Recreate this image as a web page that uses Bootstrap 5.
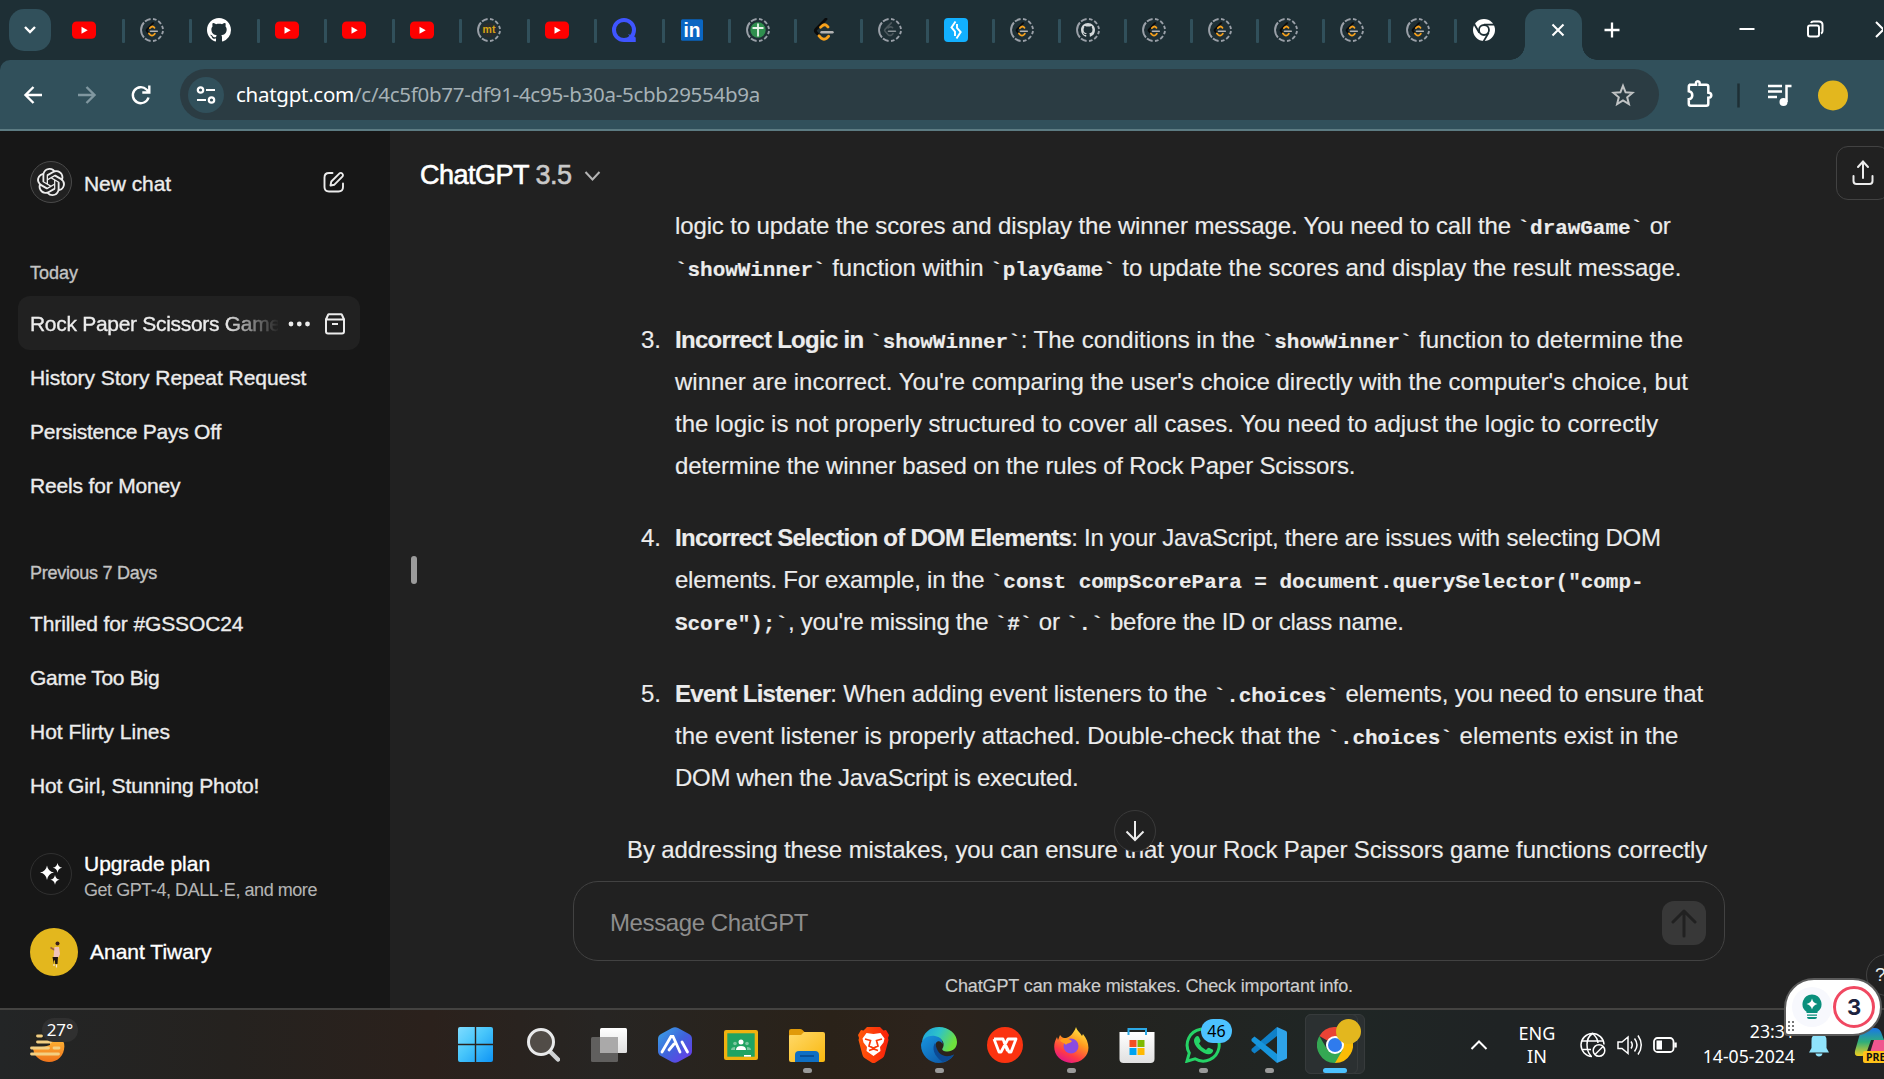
<!DOCTYPE html>
<html lang="en">
<head>
<meta charset="utf-8">
<title>ChatGPT</title>
<link href="https://cdn.jsdelivr.net/npm/bootstrap@5.3.0/dist/css/bootstrap.min.css" rel="stylesheet">
<style>
body{width:1884px;height:1079px;overflow:hidden;background:#212121;color:#ececec;font-family:"Liberation Sans",Arial,sans-serif;font-size:21px;line-height:1.3}
svg{display:block;flex:none}
/* tab strip */
.strip{height:60px;background:#1e2f35}
.strip>*{flex:none}
.tab-search{width:42px;height:42px;margin:9px 4.5px 9px 9px;border-radius:15px;background:#31505b}
.tb{width:66px;padding-left:16.5px;position:relative}
.tb.wide{width:67.5px}
.tb::after{content:"";width:3px;height:24px;border-radius:1px;background:#31505b;position:absolute;right:-1.5px;top:19px}
.tb.last{width:55px}.tb.last::after{display:none}
.active-tab{width:57px;height:51px;margin:9px 15px 0;border-radius:14px 14px 0 0;background:#31505b;position:relative;padding:0 0 9px 8px}
.active-tab::before,.active-tab::after{content:"";position:absolute;bottom:0;width:15px;height:15px}
.active-tab::before{left:-15px;background:radial-gradient(circle at 0 0,#1e2f35 14.5px,#31505b 15px)}
.active-tab::after{right:-15px;background:radial-gradient(circle at 100% 0,#1e2f35 14.5px,#31505b 15px)}
/* address bar */
.bar-wrap{height:71px;background:#1e2f35}
.bar{height:71px;background:#31505b;border-bottom:2px solid #5c7b82;border-radius:10px 0 0 0}
.omni{width:1479px;height:51px;border-radius:26px;background:#2b3c43;font-family:"Noto Sans","Open Sans",sans-serif;font-size:20.5px;letter-spacing:-.27px;color:#a5b1b6;margin-left:29px}
.omni b{font-weight:400;color:#fff}
.site-btn{width:36px;height:36px;background:#31505b}
/* letter spacing steps */
.k05{letter-spacing:-.05px}.k12{letter-spacing:-.125px}.k17{letter-spacing:-.17px}.k23{letter-spacing:-.235px}.k28{letter-spacing:-.28px}.k40{letter-spacing:-.4px}.k45{letter-spacing:-.45px}
/* app */
.app{height:877px}
.side{width:390px;background:#171717}
.side span{-webkit-text-stroke:.35px}
.side .sub span{-webkit-text-stroke:.1px}
.logo-ring{width:42px;height:42px;border:1.5px solid #4a4a4a;background:#212121}
.row-h{height:54px;padding:2px 12px 0;margin:0 30px 0 18px;border-radius:12px;white-space:nowrap}
.row-h.sel{background:#212121}
.sec{font-size:18px;color:#c3c3c3;padding-left:30px}
.fade-t{width:248px;overflow:hidden;letter-spacing:-.3px;-webkit-mask-image:linear-gradient(90deg,#000 195px,transparent 250px)}
.chat{width:1493px;position:relative}
.ttl{font-size:27px;letter-spacing:-.5px;-webkit-text-stroke:.6px;color:#fff}
.ttl span{color:#c9c9c9}
.msg{font-size:24px;line-height:42px;white-space:nowrap;-webkit-text-stroke:.15px}
.ln{display:block;width:max-content}
.item{margin-bottom:30px}
.num{width:48px;padding-left:14px}
.msg code{font:bold 21px "Liberation Mono",monospace;color:#ececec;letter-spacing:-.05px}
.msg b{letter-spacing:-.72px}
.composer{width:1152px;height:80px;border:1.5px solid #424242;border-radius:25px;background:#212121;font-size:24px;color:#8e8e8e}
.send{width:44px;height:44px;border-radius:12px;background:#383838}
.note{font-size:18px;color:#cdcdcd;-webkit-text-stroke:.15px}
.down{width:42px;height:42px;border:1.5px solid #3a3a3a;background:#212121;position:absolute;left:723.5px;top:679px}
.share{width:54px;height:54px;border:1.5px solid #424242;border-radius:12px;position:absolute;left:1446px;top:15px}
.help{width:42px;height:42px;border:1.5px solid #424242;position:absolute;left:1476px;top:823px;font-size:19px;padding-left:8px}
.grip{width:6px;height:28px;border-radius:3px;background:#9b9b9b;position:absolute;left:21px;top:425px}
/* taskbar */
.task{height:71px;border-top:2px solid #444341;background:linear-gradient(90deg,#232526 0,#25221f 230px,#2b211c 430px,#29231f 520px,#272523 600px,#2a2219 830px,#2c231c 930px,#24231f 1080px,#1f2625 1350px,#1f2324 1500px,#222324 1884px);font-family:"Noto Sans","Open Sans",sans-serif;font-size:18px;color:#fff;position:relative}
.weather{width:442.5px;padding-left:30px}
.app-i{width:66px;height:69px;position:relative}
.app-i.start{margin-right:1.5px}
.app-i.run::after{content:"";position:absolute;left:28.5px;top:58px;width:9px;height:5px;border-radius:3px;background:#9a9a9a}
.app-i.on::after{left:21px;width:24px;background:#4cc2ff}
.pill{position:absolute;left:42px;top:8px;width:36px;height:24px;border-radius:12px;background:#303030;font-size:17px;line-height:24px;text-align:center}
.cnt{position:absolute;left:31px;top:9px;width:31px;height:24px;border-radius:12px;background:#4cc2ff;color:#000;font-size:16px;line-height:24px;text-align:center}
.dot{position:absolute;left:34px;top:9px;width:25px;height:25px;background:#e3b71e}
.glow{position:absolute;left:3px;top:4px;width:60px;height:60px;border-radius:6px;background:#2b3031;border:1px solid #373b3c}
.glow+.glow{width:53px}
.lang{line-height:23px;width:60px}
.clock{line-height:25px;width:94px;font-size:17.7px;padding-bottom:2px}
.gram{position:absolute;left:1784px;top:978px;width:98px;height:58px;border:2px solid #5b5b5b;border-radius:30px 29px 29px 4px;background:#fff;z-index:5}
.ring{width:42px;height:42px;border:3.5px solid #f04861;font:bold 22px Inter,sans-serif;color:#1c2340}
.gl{width:40px;height:40px;background:#f7f8fd}
</style>
</head>
<body class="d-flex flex-column">
<svg width="0" height="0" class="position-absolute">
<defs>
<linearGradient id="gw" x1="0" y1="0" x2="1" y2="1"><stop offset="0" stop-color="#7fdcff"/><stop offset=".45" stop-color="#48c6fb"/><stop offset="1" stop-color="#0e94f5"/></linearGradient>
<linearGradient id="gh" x1="0" y1="0" x2="1" y2="1"><stop offset="0" stop-color="#3aa7e6"/><stop offset=".5" stop-color="#3f63dc"/><stop offset="1" stop-color="#6f35ea"/></linearGradient>
<linearGradient id="gf" x1="0" y1="0" x2="1" y2="1"><stop offset="0" stop-color="#ffd96a"/><stop offset="1" stop-color="#f9b80e"/></linearGradient>
<linearGradient id="gb" x1="0" y1="0" x2="1" y2="0"><stop offset="0" stop-color="#ff5a0a"/><stop offset="1" stop-color="#fa1f0a"/></linearGradient>
<linearGradient id="ge" x1="0" y1="0" x2="1" y2=".4"><stop offset="0" stop-color="#1b9de0"/><stop offset=".5" stop-color="#2ec3c9"/><stop offset="1" stop-color="#6ee03c"/></linearGradient>
<linearGradient id="ge2" x1="0" y1="0" x2="1" y2="1"><stop offset="0" stop-color="#1795e0"/><stop offset="1" stop-color="#0c4f9e"/></linearGradient>
<linearGradient id="gx" x1=".8" y1="0" x2=".3" y2="1"><stop offset="0" stop-color="#fff04a"/><stop offset=".4" stop-color="#ff9a1f"/><stop offset=".75" stop-color="#ff3b45"/><stop offset="1" stop-color="#e0158c"/></linearGradient>
<linearGradient id="gs" x1="0" y1="0" x2="0" y2="1"><stop offset="0" stop-color="#ffc13a"/><stop offset="1" stop-color="#f0741b"/></linearGradient>
<linearGradient id="gq" x1="0" y1="0" x2="0" y2="1"><stop offset="0" stop-color="#fff"/><stop offset="1" stop-color="#e0e0e0"/></linearGradient>
<linearGradient id="gc" x1="0" y1="0" x2="0" y2="1"><stop offset="0" stop-color="#1877e8"/><stop offset=".5" stop-color="#2fae7a"/><stop offset="1" stop-color="#f3cf1c"/></linearGradient>
</defs>
<symbol id="yt" viewBox="0 0 24 24"><rect y="3.5" width="24" height="17.3" rx="4.5" fill="#f00"/><path d="M9.5 8.7v7l6.2-3.5z" fill="#fff"/></symbol>
<symbol id="dash" viewBox="0 0 24 24"><g fill="none" stroke="#9aa0a8" stroke-width="1.9"><path d="M10.600 1A11.100 11.100 0 0 0 5 3.500M4 4.500A11 11 0 0 0 4 19.500M5 20.500A11.100 11.100 0 0 0 10.600 23"/><path d="M13 1A11 11 0 0 1 16.500 2M18.200 3A11 11 0 0 1 21 6M22 7.800A11 11 0 0 1 23 11M23 13A11 11 0 0 1 22 16.200M21 18A11 11 0 0 1 18.200 21M16.500 22A11 11 0 0 1 13 23"/></g></symbol>
<symbol id="lcg" viewBox="0 0 24 24"><path d="M14 1 4 11.2Q2.6 12.7 4 14.2L7 17.4" fill="none" stroke="#0a0a0a" stroke-width="2.8" stroke-linecap="round"/><path d="M8.6 9 10.6 7.2Q12.7 5.7 14.6 7.2L16 8.6M7 17.4 9.2 19.8Q12 22 14.8 19.8L16.6 18" transform="translate(0 .3)" fill="none" stroke="#f7a11b" stroke-width="2.8" stroke-linecap="round"/><path d="M9.5 14.2h11" stroke="#b3b3b3" stroke-width="2.4" stroke-linecap="round"/></symbol>
<symbol id="lcd" viewBox="0 0 24 24"><use href="#dash" width="24" height="24"/><use href="#lcg" x="4.5" y="4.3" width="15" height="15"/></symbol>
<symbol id="lcx" viewBox="0 0 24 24"><use href="#dash" width="24" height="24"/><g transform="translate(4.5 4.3) scale(.63)" fill="none" stroke="#4b575c" stroke-width="2.6" stroke-linecap="round"><path d="M14 1 4 11.2Q2.6 12.7 4 14.2L9.2 19.8Q12 22 14.8 19.8L16.6 18M9 9Q12.7 5.7 16 8.6"/><path d="M9.5 14.2h11" stroke="#8a9296"/></g></symbol>
<symbol id="ghb" viewBox="0 0 16 16"><path fill="currentColor" d="M8 0C3.58 0 0 3.58 0 8c0 3.54 2.29 6.53 5.47 7.59.4.07.55-.17.55-.38 0-.19-.01-.82-.01-1.49-2.01.37-2.53-.49-2.69-.94-.09-.23-.48-.94-.82-1.13-.28-.15-.68-.52-.01-.53.63-.01 1.08.58 1.23.82.72 1.21 1.87.87 2.33.66.07-.52.28-.87.51-1.07-1.78-.2-3.64-.89-3.64-3.95 0-.87.31-1.59.82-2.15-.08-.2-.36-1.02.08-2.12 0 0 .67-.21 2.2.82.64-.18 1.32-.27 2-.27s1.36.09 2 .27c1.53-1.04 2.2-.82 2.2-.82.44 1.1.16 1.92.08 2.12.51.56.82 1.27.82 2.15 0 3.07-1.87 3.75-3.65 3.95.29.25.54.73.54 1.48 0 1.07-.01 1.93-.01 2.2 0 .21.15.46.55.38A8.01 8.01 0 0 0 16 8c0-4.42-3.58-8-8-8z"/></symbol>
</svg>

<header class="strip d-flex">
 <div class="tab-search d-flex align-items-center justify-content-center"><svg width="14" height="10" viewBox="0 0 14 10"><path d="M2 2l5 5 5-5" fill="none" stroke="#fff" stroke-width="2.4"/></svg></div>
 <div class="tb wide d-flex align-items-center"><svg width="24" height="24"><use href="#yt"/></svg></div>
 <div class="tb wide d-flex align-items-center"><svg width="24" height="24"><use href="#lcd"/></svg></div>
 <div class="tb wide d-flex align-items-center text-white"><svg width="24" height="24"><use href="#ghb"/></svg></div>
 <div class="tb wide d-flex align-items-center"><svg width="24" height="24"><use href="#yt"/></svg></div>
 <div class="tb wide d-flex align-items-center"><svg width="24" height="24"><use href="#yt"/></svg></div>
 <div class="tb wide d-flex align-items-center"><svg width="24" height="24"><use href="#yt"/></svg></div>
 <div class="tb wide d-flex align-items-center"><svg width="24" height="24" viewBox="0 0 24 24"><use href="#dash"/><circle cx="12" cy="12" r="7.5" fill="#2a2d2e"/><text x="12" y="15" font-size="10.5" font-weight="bold" font-family="Liberation Sans" text-anchor="middle" fill="#d9a514">mt</text></svg></div>
 <div class="tb wide d-flex align-items-center"><svg width="24" height="24"><use href="#yt"/></svg></div>
 <div class="tb wide d-flex align-items-center"><svg width="24" height="24" viewBox="0 0 24 24"><circle cx="12" cy="12" r="10" fill="none" stroke="#3f55ff" stroke-width="4"/><path d="M12 20h11.5v4H12z" fill="#3f55ff"/><path d="M16 16l6 8h1.500v-5z" fill="#3f55ff"/></svg></div>
 <div class="tb d-flex align-items-center"><svg width="24" height="24" viewBox="0 0 24 24"><rect x="1" y="1.3" width="22" height="21.5" rx="1.5" fill="#0a66c2"/><text x="12" y="19.4" font-size="20" font-weight="bold" font-family="Liberation Sans" text-anchor="middle" fill="#fff" textLength="17" lengthAdjust="spacingAndGlyphs">in</text></svg></div>
 <div class="tb d-flex align-items-center"><svg width="24" height="24" viewBox="0 0 24 24"><use href="#dash"/><circle cx="12" cy="12" r="7.7" fill="#2f8f4e"/><path d="M12 5.5v13M6.5 10h11" stroke="#e8f3ea" stroke-width="1.8"/></svg></div>
 <div class="tb d-flex align-items-center"><svg width="24" height="24"><use href="#lcg"/></svg></div>
 <div class="tb d-flex align-items-center"><svg width="24" height="24"><use href="#lcx"/></svg></div>
 <div class="tb d-flex align-items-center"><svg width="24" height="24" viewBox="0 0 24 24"><rect width="24" height="24" rx="4" fill="#12b0ff"/><path d="M11.500 3.500 7.500 9.500l3.500 4v4.500M13 6v4l3.700 4-4.200 6.500" fill="none" stroke="#fff" stroke-width="1.900"/></svg></div>
 <div class="tb d-flex align-items-center"><svg width="24" height="24"><use href="#lcd"/></svg></div>
 <div class="tb d-flex align-items-center"><svg width="24" height="24" viewBox="0 0 24 24" color="#d3d8da"><use href="#dash"/><use href="#ghb" x="5" y="5" width="14" height="14"/></svg></div>
 <div class="tb d-flex align-items-center"><svg width="24" height="24"><use href="#lcd"/></svg></div>
 <div class="tb d-flex align-items-center"><svg width="24" height="24"><use href="#lcd"/></svg></div>
 <div class="tb d-flex align-items-center"><svg width="24" height="24"><use href="#lcd"/></svg></div>
 <div class="tb d-flex align-items-center"><svg width="24" height="24"><use href="#lcd"/></svg></div>
 <div class="tb d-flex align-items-center"><svg width="24" height="24"><use href="#lcd"/></svg></div>
 <div class="tb last d-flex align-items-center"><svg width="24" height="24" viewBox="0 0 24 24"><circle cx="12" cy="12" r="11" fill="#fff"/><circle cx="12" cy="12" r="5" fill="#fff" stroke="#1e2f35" stroke-width="1.8"/><path d="M12 6.600h10.500M7.300 14.800 2.200 6M16.600 14.800 11.400 23.600" stroke="#1e2f35" stroke-width="1.8"/></svg></div>
 <div class="active-tab d-flex align-items-center justify-content-center"><svg width="14" height="14" viewBox="0 0 14 14"><path d="M1.500 1.500l11 11M12.500 1.500l-11 11" stroke="#fff" stroke-width="2.100"/></svg></div>
 <svg width="286" height="60" viewBox="0 0 286 60" fill="none" stroke="#fff" stroke-width="2"><path d="M15 22.500v15M7.500 30h15" stroke-width="2.300"/><path d="M142.500 29h15"/><rect x="211" y="25.500" width="11" height="11" rx="2"/><path d="M214 23q.5-1.500 2.500-1.500h5.500q3.500 0 3.500 3.500v6q0 2-1.500 2.500"/><path d="M279 22l15 15M294 22l-15 15"/></svg>
</header>

<div class="bar-wrap">
<nav class="bar d-flex align-items-center">
 <svg width="151" height="30" viewBox="0 0 151 30" fill="none" stroke-width="2.400"><path d="M42 15H25.500M33.500 7 25.500 15l8 8" stroke="#fff"/><path d="M78 15h16.500M86.500 7l8 8-8 8" stroke="#8097a0"/><path d="M148.500 17.500A8 8 0 1 1 146.500 9.500L149 12M149.300 5.500v7h-7" stroke="#fff"/></svg>
 <div class="omni d-flex align-items-center">
  <div class="site-btn rounded-circle ms-2 d-flex align-items-center justify-content-center"><svg width="20" height="20" viewBox="0 0 20 20" fill="none" stroke="#fff" stroke-width="2.200"><circle cx="4.500" cy="5" r="2.700"/><path d="M10 5h9M1 15h9"/><circle cx="15.500" cy="15" r="2.700"/></svg></div>
  <span class="ms-2 ps-1"><b>chatgpt.com</b>/c/4c5f0b77-df91-4c95-b30a-5cbb29554b9a</span>
  <svg class="ms-auto me-4" width="24" height="24" viewBox="0 0 24 24"><path d="M12 2.800l2.600 6.500 7 .5-5.400 4.500 1.700 6.800-5.900-3.700-5.900 3.700 1.700-6.800-5.400-4.500 7-.5z" fill="none" stroke="#c0c3c4" stroke-width="2"/></svg>
 </div>
 <svg width="225" height="50" viewBox="1659 0 225 50" fill="none" stroke="#fff" stroke-width="2.500"><path d="M1690 15.500h7q-.5-3.500 1.800-3.500t1.800 3.500h6.700q2 0 2 2v6q3 .2 3 2.500t-3 2.500v6q0 2-2 2h-15.500q-2 0-2-2v-4.500q3.500-.5 3.500-4t-3.500-4v-4.500q0-2 2-2z" transform="translate(-1 -.8)"/><path d="M1738.500 13.500v24" stroke="#1e2f35"/><path d="M1768 16h14M1768 21.500h14M1768 27h9"/><path d="M1786.500 32V16h5" /><circle cx="1783.500" cy="32" r="4" fill="#fff" stroke="none"/><circle cx="1833" cy="25.500" r="15" fill="#e3b71e" stroke="none"/></svg>
</nav>
</div>

<main class="app d-flex">
 <aside class="side d-flex flex-column">
  <div class="d-flex align-items-center" style="height:42px;margin:30px 45px 0 30px">
   <div class="logo-ring rounded-circle d-flex align-items-center justify-content-center"><svg width="28" height="28" viewBox="0 0 24 24" fill="#ececec"><path d="M22.2819 9.8211a5.9847 5.9847 0 0 0-.5157-4.9108 6.0462 6.0462 0 0 0-6.5098-2.9A6.0651 6.0651 0 0 0 4.9807 4.1818a5.9847 5.9847 0 0 0-3.9977 2.9 6.0462 6.0462 0 0 0 .7427 7.0966 5.98 5.98 0 0 0 .511 4.9107 6.051 6.051 0 0 0 6.5146 2.9001A5.9847 5.9847 0 0 0 13.2599 24a6.0557 6.0557 0 0 0 5.7718-4.2058 5.9894 5.9894 0 0 0 3.9977-2.9001 6.0557 6.0557 0 0 0-.7475-7.0729zm-9.022 12.6081a4.4755 4.4755 0 0 1-2.8764-1.0408l.1419-.0804 4.7783-2.7582a.7948.7948 0 0 0 .3927-.6813v-6.7369l2.02 1.1686a.071.071 0 0 1 .038.052v5.5826a4.504 4.504 0 0 1-4.4945 4.4944zm-9.6607-4.1254a4.4708 4.4708 0 0 1-.5346-3.0137l.142.0852 4.783 2.7582a.7712.7712 0 0 0 .7806 0l5.8428-3.3685v2.3324a.0804.0804 0 0 1-.0332.0615L9.74 19.9502a4.4992 4.4992 0 0 1-6.1408-1.6464zM2.3408 7.8956a4.485 4.485 0 0 1 2.3655-1.9728V11.6a.7664.7664 0 0 0 .3879.6765l5.8144 3.3543-2.0201 1.1685a.0757.0757 0 0 1-.071 0l-4.8303-2.7865A4.504 4.504 0 0 1 2.3408 7.872zm16.5963 3.8558L13.1038 8.364 15.1192 7.2a.0757.0757 0 0 1 .071 0l4.8303 2.7913a4.4944 4.4944 0 0 1-.6765 8.1042v-5.6772a.79.79 0 0 0-.407-.667zm2.0107-3.0231l-.142-.0852-4.7735-2.7818a.7759.7759 0 0 0-.7854 0L9.409 9.2297V6.8974a.0662.0662 0 0 1 .0284-.0615l4.8303-2.7866a4.4992 4.4992 0 0 1 6.6802 4.66zM8.3065 12.863l-2.02-1.1638a.0804.0804 0 0 1-.038-.0567V6.0742a4.4992 4.4992 0 0 1 7.3757-3.4537l-.142.0805L8.704 5.459a.7948.7948 0 0 0-.3927.6813zm1.0976-2.3654l2.602-1.4998 2.6069 1.4998v2.9994l-2.5974 1.4997-2.6067-1.4997Z"/></svg></div>
   <span class="k05 pt-1" style="margin-left:12px">New chat</span>
   <svg class="ms-auto" width="22" height="22" viewBox="0 0 22 22" fill="none" stroke="#ececec" stroke-width="1.900" stroke-linejoin="round" stroke-linecap="round"><path d="M9.500 2H6Q1.500 2 1.500 6.500V16Q1.500 20.500 6 20.500h9.500Q20 20.500 20 16v-3.500"/><path d="M7.500 14.500l.8-4 8.200-8.200q1.500-1 2.800.3t.3 2.800l-8.200 8.300z"/></svg>
  </div>
  <div class="sec" style="margin-top:59px;height:34px"><span>Today</span></div>
  <div class="row-h sel d-flex align-items-center"><span class="fade-t">Rock Paper Scissors Game</span><svg width="70" height="22" viewBox="0 0 70 22" fill="none" stroke="#ececec" stroke-width="2"><g fill="#ececec" stroke="none" transform="translate(3)"><circle cx="10" cy="11" r="2.400"/><circle cx="18.300" cy="11" r="2.400"/><circle cx="26.500" cy="11" r="2.400"/></g><path d="M48 6.500v12q0 2 2 2h14q2 0 2-2v-12zM48 6.500l2-4.500q.3-.7 1-.7h12q.7 0 1 .7l2 4.500M54 11h6"/></svg></div>
  <div class="row-h d-flex align-items-center"><span class="k05">History Story Repeat Request</span></div>
  <div class="row-h d-flex align-items-center"><span class="k23">Persistence Pays Off</span></div>
  <div class="row-h d-flex align-items-center"><span class="k17">Reels for Money</span></div>
  <div class="sec" style="margin-top:50px;height:34px"><span class="k28">Previous 7 Days</span></div>
  <div class="row-h d-flex align-items-center"><span class="k12">Thrilled for #GSSOC24</span></div>
  <div class="row-h d-flex align-items-center"><span class="k28">Game Too Big</span></div>
  <div class="row-h d-flex align-items-center"><span>Hot Flirty Lines</span></div>
  <div class="row-h d-flex align-items-center"><span class="k12">Hot Girl, Stunning Photo!</span></div>
  <div class="d-flex align-items-center" style="margin:35px 0 0 30px;height:54px">
   <div class="logo-ring rounded-circle d-flex align-items-center justify-content-center bg-transparent" style="border-color:#303030"><svg width="24" height="24" viewBox="0 0 24 24" fill="#fff"><path d="M8 3.500q1 6 7 7-6 1-7 7.500-1-6.500-7-7.500 6-1 7-7zM18.500 1q.7 4 4.700 4.700-4 .7-4.700 5-.7-4.300-4.700-5Q17.800 5 18.500 1zM16 13q.7 4 4.700 4.700-4 .7-4.700 5-.7-4.300-4.700-5Q15.300 17 16 13z"/></svg></div>
   <div style="margin:5px 0 0 12px;line-height:27px"><div class="text-white"><span>Upgrade plan</span></div><div class="sub" style="font-size:18px;color:#b4b4b4"><span class="k45">Get GPT-4, DALL·E, and more</span></div></div>
  </div>
  <div class="d-flex align-items-center" style="margin:27px 0 0 30px;height:48px">
   <svg width="48" height="48" viewBox="0 0 48 48"><circle cx="24" cy="24" r="24" fill="#e3b71e"/><path d="M20.500 19.500l5 3" stroke="#9b5c43" stroke-width="1.500"/><circle cx="27.500" cy="15.500" r="2" fill="#3a2019"/><path d="M24.500 19h4.500l1 7-1.500 3.500h-5z" fill="#efc3b6"/><path d="M22.500 29h5.500l-.5 7h-2.300l-.3-4-1 1v3.500" fill="#1d1512"/><path d="M24 36v2M26.500 36.500v3" stroke="#f5e3d0" stroke-width="1.200"/></svg>
   <span class="text-white" style="margin-left:12px">Anant Tiwary</span>
  </div>
 </aside>

 <section class="chat d-flex flex-column">
  <div class="d-flex align-items-center" style="height:42px;margin:24px 0 0 30px"><span class="ttl">ChatGPT <span>3.5</span></span><svg style="margin-left:12px" width="17" height="12" viewBox="0 0 17 12"><path d="M1.500 2l7 7.500 7-7.500" fill="none" stroke="#b4b4b4" stroke-width="2"/></svg></div>
  <div class="msg" style="margin:8px 0 0 237px">
   <div class="item d-flex"><div class="num"></div><div>
    <span class="ln k12">logic to update the scores and display the winner message. You need to call the <code>`drawGame`</code> or</span>
    <span class="ln k05"><code>`showWinner`</code> function within <code>`playGame`</code> to update the scores and display the result message.</span></div></div>
   <div class="item d-flex"><div class="num">3.</div><div>
    <span class="ln"><b>Incorrect Logic in</b> <code>`showWinner`</code>: The conditions in the <code>`showWinner`</code> function to determine the</span>
    <span class="ln">winner are incorrect. You're comparing the user's choice directly with the computer's choice, but</span>
    <span class="ln">the logic is not properly structured to cover all cases. You need to adjust the logic to correctly</span>
    <span class="ln k17">determine the winner based on the rules of Rock Paper Scissors.</span></div></div>
   <div class="item d-flex"><div class="num">4.</div><div>
    <span class="ln k23"><b>Incorrect Selection of DOM Elements</b>: In your JavaScript, there are issues with selecting DOM</span>
    <span class="ln k23">elements. For example, in the <code>`const compScorePara = document.querySelector("comp-</code></span>
    <span class="ln k28"><code>Score");`</code>, you're missing the <code>`#`</code> or <code>`.`</code> before the ID or class name.</span></div></div>
   <div class="item d-flex"><div class="num">5.</div><div>
    <span class="ln k17"><b>Event Listener</b>: When adding event listeners to the <code>`.choices`</code> elements, you need to ensure that</span>
    <span class="ln">the event listener is properly attached. Double-check that the <code>`.choices`</code> elements exist in the</span>
    <span class="ln k28">DOM when the JavaScript is executed.</span></div></div>
   <span class="ln k12">By addressing these mistakes, you can ensure that your Rock Paper Scissors game functions correctly</span>
  </div>
  <div class="composer d-flex align-items-center" style="margin:10px 0 0 183px;padding:3px 18px 0 36px"><span class="k40">Message ChatGPT</span><div class="send ms-auto d-flex align-items-center justify-content-center"><svg width="26" height="30" viewBox="0 0 26 30"><path d="M13 28V3M2 14 13 3l11 11" fill="none" stroke="#212121" stroke-width="3" stroke-linecap="round" stroke-linejoin="round"/></svg></div></div>
  <div class="note text-center" style="margin:14px 0 0 24px;width:1470px"><span class="k12">ChatGPT can make mistakes. Check important info.</span></div>
  <div class="down rounded-circle d-flex align-items-center justify-content-center"><svg width="20" height="22" viewBox="0 0 20 22"><path d="M10 1v19M1.500 11.500 10 20l8.500-8.500" fill="none" stroke="#ececec" stroke-width="2"/></svg></div>
  <div class="share d-flex align-items-center justify-content-center"><svg width="22" height="26" viewBox="0 0 22 26"><path d="M11 18V2M6 7l5-5.500L16 7M1.500 16v5q0 3 3 3h13q3 0 3-3v-5" fill="none" stroke="#ececec" stroke-width="2" stroke-linecap="round"/></svg></div>
  <div class="help rounded-circle d-flex align-items-center">?</div>
  <div class="grip"></div>
 </section>
</main>

<footer class="task d-flex">
 <div class="weather position-relative"><svg style="margin-top:23px" width="36" height="30" viewBox="0 0 36 30"><path d="M3 16a16.500 16.500 0 0 1 31-6c2 10-5 19-15 19-7 0-12-4-14.500-8z" fill="url(#gs)"/><path d="M0 0h20v12q-10 4-20 1z" fill="#25241f"/><g stroke="#f3cf82" stroke-width="2.800" stroke-linecap="round"><path d="M7.500 3h4M7.500 9h13M1.500 15h17M24 15h5M1.500 21h27"/></g></svg><div class="pill">27°</div></div>
 <div class="app-i start d-flex align-items-center justify-content-center"><svg width="35" height="35" viewBox="0 0 35 35"><path d="M2 0h14.800v16.800H0V2q0-2 2-2zM18.200 0H33q2 0 2 2v14.800H18.200zM0 18.200h16.800V35H2q-2 0-2-2zM18.200 18.200H35V33q0 2-2 2H18.200z" fill="url(#gw)"/></svg></div>
 <div class="app-i d-flex align-items-center justify-content-center"><svg width="34" height="36" viewBox="0 0 34 36"><path d="M24 24.500l8 8" stroke="#cfd2d4" stroke-width="4.500" stroke-linecap="round"/><circle cx="15" cy="15" r="12.500" fill="#514c47" stroke="#e9eaeb" stroke-width="3"/></svg></div>
 <div class="app-i d-flex align-items-center justify-content-center"><svg width="36" height="34" viewBox="0 0 36 34"><rect x="9" y="0" width="27" height="25" rx="1.500" fill="url(#gq)"/><rect y="9" width="27" height="25" rx="1.500" fill="#6b6a69" fill-opacity=".85"/><path d="M9 9h18v16H9z" fill="#aaa9a9"/></svg></div>
 <div class="app-i d-flex align-items-center justify-content-center"><svg width="34" height="36" viewBox="0 0 34 36"><path d="M14 1q3-1.500 6 0l11 6q3 1.500 3 5v12q0 3.500-3 5l-11 6q-3 1.500-6 0L3 29q-3-1.500-3-5V12q0-3.500 3-5z" fill="url(#gh)"/><path d="M4 25 13 9.500h2L22 25M11 23l5-6M24 15l5.500 10" fill="none" stroke="#fff" stroke-width="2.800" stroke-linecap="round"/></svg></div>
 <div class="app-i d-flex align-items-center justify-content-center"><svg width="34" height="30" viewBox="0 0 34 30"><rect width="34" height="30" rx="2" fill="#efb20f"/><rect x="3.300" y="3.300" width="27.400" height="23.400" fill="#20a362"/><g fill="#fff"><circle cx="17" cy="12" r="2.500"/><path d="M12 20q0-4 5-4t5 4z"/><path d="M20 25h7v1.700h-7z"/></g><g fill="#7cc8a0"><circle cx="11" cy="13.500" r="1.800"/><circle cx="23" cy="13.500" r="1.800"/><path d="M7 20q0-3 4-3v3zM27 20q0-3-4-3v3z"/></g></svg></div>
 <div class="app-i run d-flex align-items-center justify-content-center"><svg width="36" height="34" viewBox="0 0 36 34"><path d="M0 10V3q0-2 2-2h9q1.500 0 2.500 1l2 2-3 6z" fill="#e09a0a"/><path d="M0 8q0-1 1-1h11l3-3h19q2 0 2 2v26q0 2-2 2H2q-2 0-2-2z" fill="url(#gf)"/><path d="M6 34V27q0-4 4-4h16q4 0 4 4v7z" fill="#0f6fc4"/><path d="M11 28h14" stroke="#074a8c" stroke-width="1.600"/></svg></div>
 <div class="app-i d-flex align-items-center justify-content-center"><svg width="31" height="36" viewBox="0 0 31 36"><path d="M9 0h13l3.500 3.500L28 3l3 5-1 3 .5 2-4 15q-.5 2-2 3l-7 4.500q-2 1-4 0L6.500 31q-1.500-1-2-3L.5 13 1 11 0 8l3-5 2.500.5z" fill="url(#gb)"/><path d="M15.500 7l7-1 4 5.500-1 4-3.500 4.500.5 4-7 5-7-5 .5-4L5.500 15.500l-1-4 4-5.500z" fill="#fff"/><path d="M7 12l5.500 1.500L11 19l4.500 2 4.500-2-1.500-5.500L24 12M11 23.500l4.500-1.500 4.500 1.500" fill="none" stroke="#fb3a0a" stroke-width="1.700"/></svg></div>
 <div class="app-i run d-flex align-items-center justify-content-center"><svg width="36" height="36" viewBox="0 0 36 36"><path d="M1 15C2 6 9 0 18 0c10 0 18 7 18 15 0 6-4.500 9.500-9.500 9.500-4 0-6-1.500-5-3C24 18 23 11 14 10 8 9.300 3 12 1 15z" fill="url(#ge)"/><path d="M0 18C1 11 8 8 14 9c5 .8 8 4 7.500 8-1-3-5-4-6.500-1-2 4 0 10 6 13 4 1.800 8 1 12-1.500C30 33 24 36 18 36 8 36 0 28 0 18z" fill="url(#ge2)"/><path d="M14 16c-3 4-2 13 8 19 5-1.500 9-4 11-7.500-5 2.500-11 2.500-15-2-2-2.500-3-6-4-9.500z" fill="#0c4a93"/></svg></div>
 <div class="app-i d-flex align-items-center justify-content-center"><svg width="36" height="36" viewBox="0 0 36 36"><circle cx="18" cy="18" r="18" fill="#fb3310"/><path d="M7 12h9l4.500 12M7 12l5 13h2l7-13h8l-5 13h-2L17 15" fill="none" stroke="#fff" stroke-width="2.800" stroke-linejoin="round"/></svg></div>
 <div class="app-i run d-flex align-items-center justify-content-center"><svg width="35" height="36" viewBox="0 0 35 36"><path d="M22 0c1 4 4 5 6 9l1-2c6 7 8 18 1 24-7 7-19 6-25 0-6-6-6-14-2-21l1 3 2-5c2 3 4 3 6 3 4-1 8-5 10-11z" fill="url(#gx)"/><circle cx="17" cy="19" r="7.500" fill="#8a4be0"/><path d="M6 13c4-3 8-2 12 1-2 3-5 1.500-6 4-2-3-5-2-6-5z" fill="#ff9d1d"/></svg></div>
 <div class="app-i d-flex align-items-center justify-content-center"><svg width="36" height="36" viewBox="0 0 36 36"><path d="M.5 5h35v27q0 4-4 4h-27q-4 0-4-4z" fill="url(#gq)"/><path d="M9.500 8V2h17.500v6" fill="none" stroke="#2ca9e6" stroke-width="2"/><path d="M10.500 13h7v7h-7z" fill="#f25022"/><path d="M18.500 13h7v7h-7z" fill="#7fba00"/><path d="M10.500 21h7v7h-7z" fill="#00a4ef"/><path d="M18.500 21h7v7h-7z" fill="#ffb900"/></svg></div>
 <div class="app-i run d-flex align-items-center justify-content-center"><svg width="36" height="36" viewBox="0 0 36 36"><path d="M2 34.200 4.300 26A16 16 0 1 1 10 31.800z" fill="none" stroke="#25d366" stroke-width="3"/><path d="M11 9.500q2-1 3 .5l1.500 3.500q.3 1-1.500 3 2.500 4.500 7 6.500 2-2.500 3-2.200l3.500 1.700q1.500 1-.5 3.500-3 2.500-8 0-6-3-9-8.500-2.500-5 1-8z" fill="#25d366"/></svg><div class="cnt">46</div></div>
 <div class="app-i run d-flex align-items-center justify-content-center"><svg width="36" height="36" viewBox="0 0 36 36"><path d="M26 9 3.500 26.500 0.500 24v-2L26 0z" fill="#0f80c8"/><path d="M26 27 3.500 9.500.5 12v2L26 36z" fill="#1795dc"/><path d="M26 0l9 4q1 .5 1 1.500v25q0 1-1 1.500l-9 4z" fill="#2ea3ea"/></svg></div>
 <div class="app-i run on d-flex align-items-center justify-content-center"><div class="glow"></div><div class="glow"></div><svg class="position-relative" width="36" height="36" viewBox="0 0 36 36"><path d="M18 18 2.400 9A18 18 0 0 1 33.600 9z" fill="#ea4335"/><path d="M18 18V9h15.600A18 18 0 0 1 18 36z" fill="#fbbc05"/><path d="M2.400 9A18 18 0 0 0 18 36l7.800-13.500L10.200 22.500z" fill="#34a853"/><circle cx="18" cy="18" r="9" fill="#fff"/><circle cx="18" cy="18" r="7" fill="#2f7bed"/></svg><div class="dot rounded-circle"></div></div>
 <div class="d-flex align-items-center" style="margin-left:102px">
  <svg width="18" height="12" viewBox="0 0 18 12"><path d="M1.500 10 9 2.500l7.500 7.500" fill="none" stroke="#fff" stroke-width="2"/></svg>
  <div class="lang text-center" style="margin-left:19px">ENG<br>IN</div>
  <svg style="margin-left:13px" width="98" height="26" viewBox="1580 0 98 26" fill="none" stroke="#fff" stroke-width="1.500"><path d="M1592 24.500a11.500 11.500 0 1 1 12-12"/><path d="M1591 24q-4-4-4-11.500t5.500-11q5 4 5.500 9.500M1582 9h21M1582 17.500h9"/><circle cx="1599" cy="18.500" r="5.800"/><path d="M1595 22.500l8-8"/><path d="M1618 10v6.500h4l6 5V5l-6 5zM1631 9.500q2.500 3.500 0 7M1634.500 6.500q5 6.500 0 13M1638 3.500q6.500 9.500 0 19"/><rect x="1654" y="6" width="19.500" height="14" rx="3.500" stroke-width="1.800"/><path d="M1675.500 10.500v5" stroke-width="2.500"/><path d="M1656.500 8.500h5.500v9h-5.500z" fill="#fff" stroke="none"/></svg>
  <div class="clock text-end" style="margin-left:23px">23:31<br>14-05-2024</div>
  <svg style="margin-left:13px" width="22" height="26" viewBox="0 0 22 26"><path d="M11 1q7.500 0 7.500 8v7l2.500 4.500H1L3.500 16V9Q3.500 1 11 1zM7.500 21.500h7q-.5 3-3.500 3t-3.500-3z" fill="#8fe3fb"/></svg>
  <svg style="margin-left:24px" width="30" height="36" viewBox="0 0 30 36"><path d="M7 3q2-2 6-2h8q4 0 6 4l3 8H17l-5 14q-1 2-4 2H4q-4 0-3-5z" fill="url(#gc)"/><path d="M20 13h10v16H15z" fill="#f0568f"/><rect x="9" y="24" width="34" height="12" rx="2" fill="#ffc21a"/><text x="12" y="34" font-size="10.500" font-weight="bold" font-family="Noto Sans" fill="#111">PRE</text></svg>
 </div>
</footer>

<div class="gram d-flex align-items-center">
 <svg class="position-absolute" style="left:2px;bottom:2px" width="7" height="12" viewBox="0 0 7 12" fill="#777"><path d="M0 1h2v2H0zM4 1h2v2H4zM0 5h2v2H0zM4 5h2v2H4zM0 9h2v2H0zM4 9h2v2H4z"/></svg>
 <div class="gl rounded-circle d-flex align-items-center justify-content-center" style="margin-left:6px"><svg width="20" height="26" viewBox="0 0 20 26"><path d="M10 .5a9.500 9.500 0 0 1 5.500 17.200V19h-11v-1.300A9.500 9.500 0 0 1 10 .5zM5 20.500h10v1.300H5zM5 23h10q0 2-2 2H7q-2 0-2-2z" fill="#0a8f7c"/><path d="M10 4.500q1 4.500 5.500 5.500-4.500 1-5.500 5.500Q9 11 4.500 10 9 9 10 4.500z" fill="#fff"/></svg></div>
 <div class="ring rounded-circle d-flex align-items-center justify-content-center" style="margin-left:1px">3</div>
</div>
<script src="https://cdn.jsdelivr.net/npm/bootstrap@5.3.0/dist/js/bootstrap.bundle.min.js"></script>
</body>
</html>
